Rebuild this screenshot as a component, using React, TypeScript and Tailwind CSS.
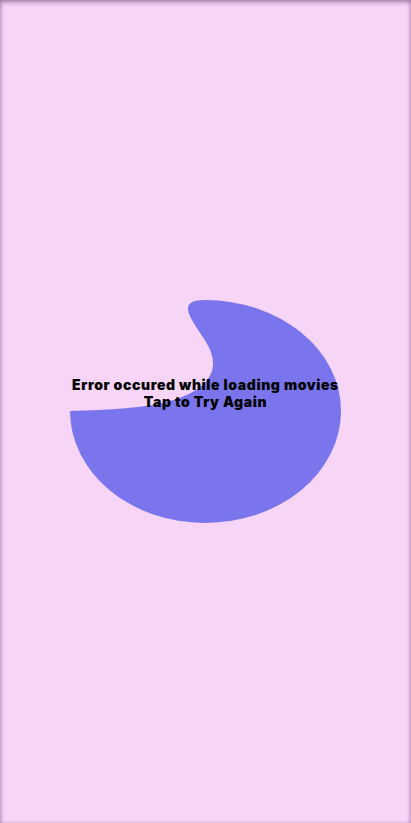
export default function App() {
  return (
    <div className="relative flex h-[823px] w-full items-center justify-center overflow-hidden bg-[#f6d5f7] shadow-[inset_0_3px_4px_rgba(80,30,90,0.35),inset_2px_0_3px_rgba(80,30,90,0.15),inset_-2px_0_3px_rgba(80,30,90,0.15)]">
      <button
        className="relative mt-[1px] flex h-[224px] w-[272px] items-center justify-center"
        style={{ fontFamily: "Inter, 'Liberation Sans', sans-serif" }}
      >
        <svg
          className="absolute left-0 top-0"
          width="272"
          height="224"
          viewBox="0 0 272 224"
        >
          <path
            d="M 0 111 C 40 110 75 108 100 101 C 125 94 142 82 143 65 C 144 48 130 35 122 20 C 114 6 118 0 135 0 A 136 111 0 0 1 271 111 A 136 112 0 0 1 135 223 A 135 112 0 0 1 0 111 Z"
            fill="#7a75ec"
          />
        </svg>
        <span className="relative mb-[38px] whitespace-nowrap text-center text-[14px] font-black leading-[17px] tracking-[0.6px] text-black">
          Error occured while loading movies
          <br />
          Tap to Try Again
        </span>
      </button>
    </div>
  );
}
